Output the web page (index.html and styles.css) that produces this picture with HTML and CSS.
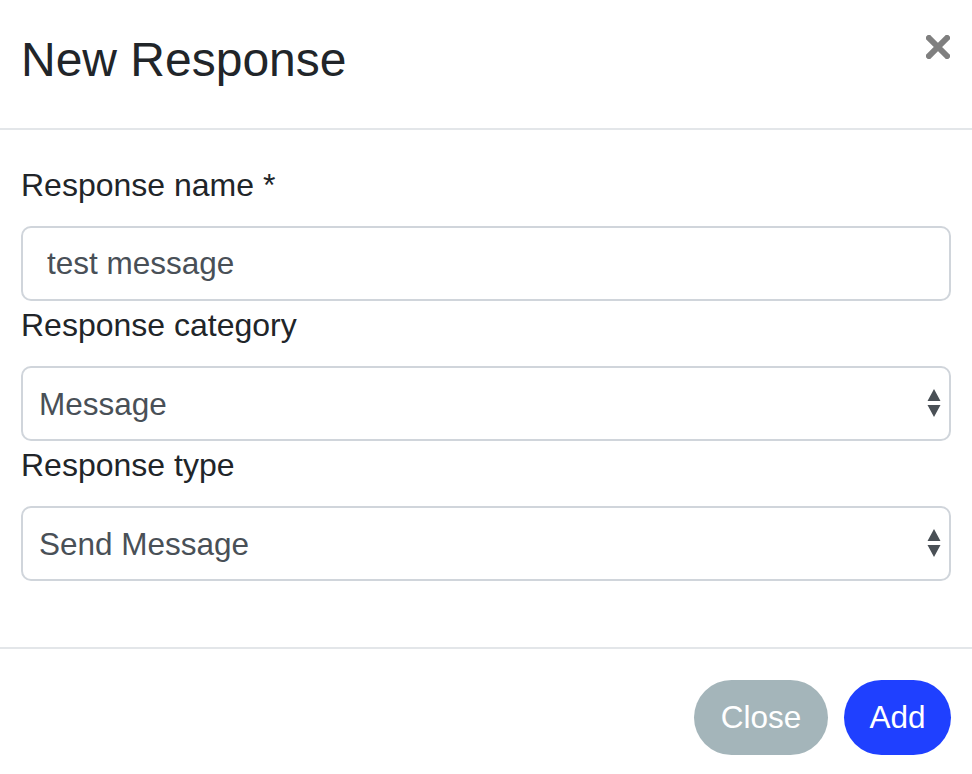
FILE: index.html
```html
<!DOCTYPE html>
<html lang="en">
<head>
<meta charset="utf-8">
<title>New Response</title>
<link rel="stylesheet" href="styles.css">
</head>
<body>
<div class="modal">
  <header class="modal-header">
    <h4 class="modal-title">New Response</h4>
    <button class="close" type="button" aria-label="Close">
      <svg width="24" height="24" viewBox="0 0 24 24"><path d="M3 3 L21 21 M21 3 L3 21" stroke="#7f7f7f" stroke-width="6" stroke-linecap="square" fill="none"/></svg>
    </button>
  </header>
  <div class="modal-body">
    <label class="label" for="name">Response name *</label>
    <input class="control input" id="name" type="text" value="test message">
    <label class="label" for="cat">Response category</label>
    <div class="select-wrap">
      <select class="control select" id="cat"><option>Message</option></select>
      <svg class="arrows" width="14" height="28" viewBox="0 0 14 28"><path d="M7 0 L13.5 12 L0.5 12 Z M0.5 16 L13.5 16 L7 28 Z" fill="#4a5056"/></svg>
    </div>
    <label class="label" for="type">Response type</label>
    <div class="select-wrap">
      <select class="control select" id="type"><option>Send Message</option></select>
      <svg class="arrows" width="14" height="28" viewBox="0 0 14 28"><path d="M7 0 L13.5 12 L0.5 12 Z M0.5 16 L13.5 16 L7 28 Z" fill="#4a5056"/></svg>
    </div>
  </div>
  <footer class="modal-footer">
    <button class="btn btn-close" type="button">Close</button>
    <button class="btn btn-add" type="button">Add</button>
  </footer>
</div>
</body>
</html>
```

FILE: styles.css
```css
html, body {
  margin: 0;
  padding: 0;
  background: #ffffff;
}
body {
  font-family: "Liberation Sans", Arial, Helvetica, sans-serif;
  color: #212529;
  width: 972px;
  height: 774px;
  overflow: hidden;
}
.modal {
  display: flex;
  flex-direction: column;
}
.modal-header {
  display: flex;
  justify-content: space-between;
  align-items: flex-start;
  padding: 24px 22px 32px 21px;
  border-bottom: 2px solid #e3e6e9;
}
.modal-title {
  margin: 0;
  font-size: 48px;
  font-weight: 400;
  line-height: 72px;
}
.close {
  background: none;
  border: 0;
  padding: 0;
  margin-top: 11px;
  width: 24px;
  height: 24px;
  cursor: pointer;
}
.close svg { display: block; }
.modal-body {
  display: flex;
  flex-direction: column;
  padding: 31px 21px 66px 21px;
}
.label {
  font-size: 32px;
  line-height: 48px;
  margin-bottom: 17px;
  color: #212529;
}
.control {
  box-sizing: border-box;
  width: 100%;
  height: 75px;
  border: 2px solid #d0d5db;
  border-radius: 10px;
  background: #fff;
  font-family: "Liberation Sans", Arial, Helvetica, sans-serif;
  font-size: 31.5px;
  color: #495057;
  margin: 0;
  outline: none;
}
.input {
  padding: 0 24px;
}
.select-wrap {
  position: relative;
}
.select {
  appearance: none;
  -webkit-appearance: none;
  padding: 0 16px;
  display: block;
}
.arrows {
  position: absolute;
  right: 10px;
  top: 23px;
  pointer-events: none;
}
.modal-footer {
  display: flex;
  justify-content: flex-end;
  gap: 16px;
  padding: 31px 21px 32px 21px;
  border-top: 2px solid #e3e6e9;
}
.btn {
  height: 75px;
  border: 0;
  border-radius: 38px;
  color: #ffffff;
  font-family: "Liberation Sans", Arial, Helvetica, sans-serif;
  font-size: 31.5px;
  padding: 0 25px;
  cursor: pointer;
}
.btn-close {
  background: #a4b5ba;
  width: 134px;
}
.btn-add {
  background: #1f40ff;
  width: 107px;
}
```
